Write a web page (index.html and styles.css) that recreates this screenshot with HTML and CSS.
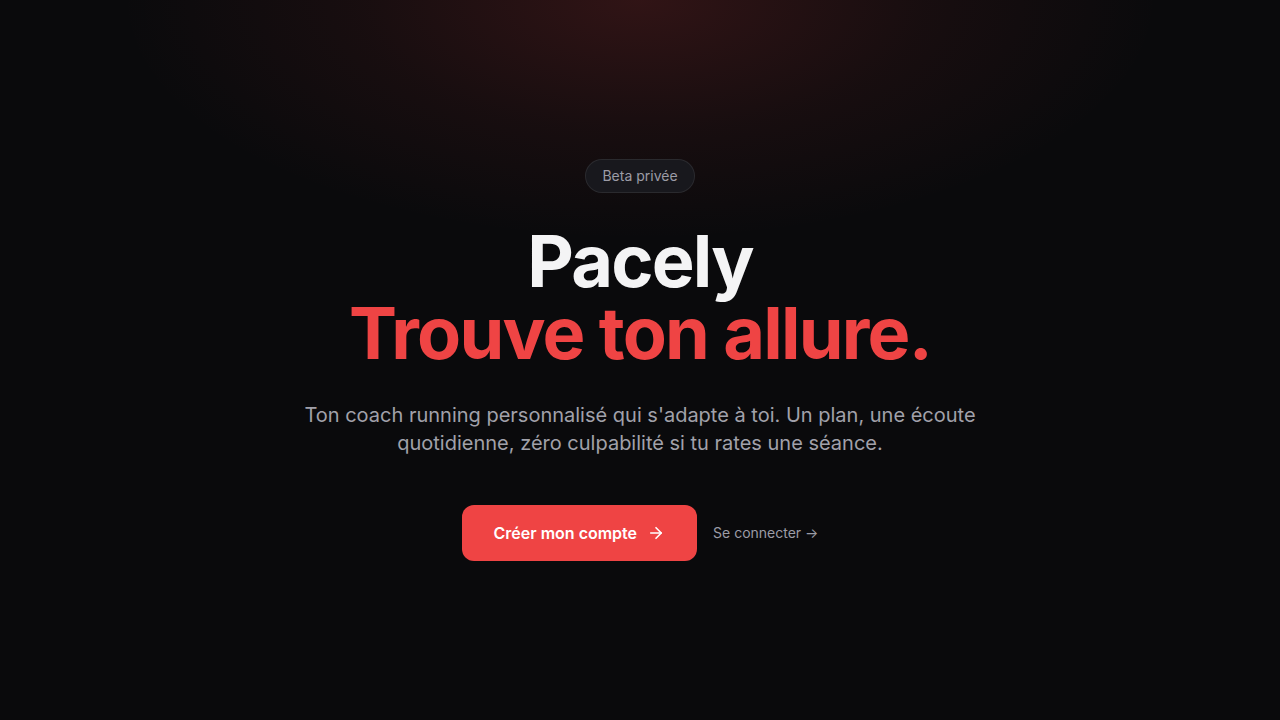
FILE: index.html
```html
<!DOCTYPE html>
<html lang="fr">
<head>
<meta charset="utf-8">
<title>Pacely</title>
<link rel="stylesheet" href="styles.css">
</head>
<body>
<main class="hero">
  <div class="glow"></div>
  <div class="content">
    <span class="badge">Beta privée</span>
    <h1 class="title">
      <span class="brand">Pacely</span>
      <span class="tagline">Trouve ton allure.</span>
    </h1>
    <p class="lead">Ton coach running personnalisé qui s'adapte à toi. Un plan, une écoute quotidienne, zéro culpabilité si tu rates une séance.</p>
    <div class="actions">
      <a class="btn-primary" href="#">Créer mon compte
        <svg class="arrow" viewBox="0 0 24 24" width="18" height="18" fill="none" stroke="currentColor" stroke-width="2.2" stroke-linecap="round" stroke-linejoin="round"><path d="M5 12h14"/><path d="M12 5l7 7-7 7"/></svg>
      </a>
      <a class="link" href="#">Se connecter →</a>
    </div>
  </div>
</main>
</body>
</html>
```
FILE: styles.css
```css
* { box-sizing: border-box; }
html, body { margin: 0; padding: 0; }
body {
  background: #0a0a0c;
  font-family: Inter, "Noto Sans", sans-serif;
  color: #fafafa;
  height: 720px;
  overflow: hidden;
}
.hero {
  position: relative;
  height: 720px;
  display: flex;
  align-items: center;
  justify-content: center;
}
.glow {
  position: absolute;
  inset: 0;
  background: radial-gradient(ellipse 520px 240px at 50% 0, rgba(239, 68, 68, 0.17), rgba(239, 68, 68, 0.06) 55%, transparent 100%);
  pointer-events: none;
}
.content {
  position: relative;
  display: flex;
  flex-direction: column;
  align-items: center;
  text-align: center;
}
.badge {
  display: inline-block;
  padding: 6px 16px;
  font-size: 14px;
  line-height: 20px;
  color: #9c9ca6;
  background: #18181d;
  border: 1px solid rgba(255, 255, 255, 0.08);
  border-radius: 999px;
}
.title {
  margin: 32px 0 0;
  font-size: 72px;
  line-height: 72px;
  font-weight: 700;
  letter-spacing: -0.025em;
  display: flex;
  flex-direction: column;
}
.brand { color: #f4f4f5; }
.tagline { color: #ef4444; }
.lead {
  margin: 32px 0 0;
  max-width: 672px;
  font-size: 20px;
  line-height: 28px;
  color: #a1a1aa;
}
.actions {
  margin-top: 48px;
  display: flex;
  align-items: center;
  gap: 16px;
}
.btn-primary {
  display: inline-flex;
  align-items: center;
  gap: 10px;
  height: 56px;
  padding: 0 32px;
  background: #ef4444;
  color: #fff;
  font-size: 16px;
  font-weight: 600;
  border-radius: 12px;
  text-decoration: none;
}
.arrow { display: block; }
.link {
  font-size: 14px;
  line-height: 20px;
  color: #9c9ca6;
  text-decoration: none;
}
```
